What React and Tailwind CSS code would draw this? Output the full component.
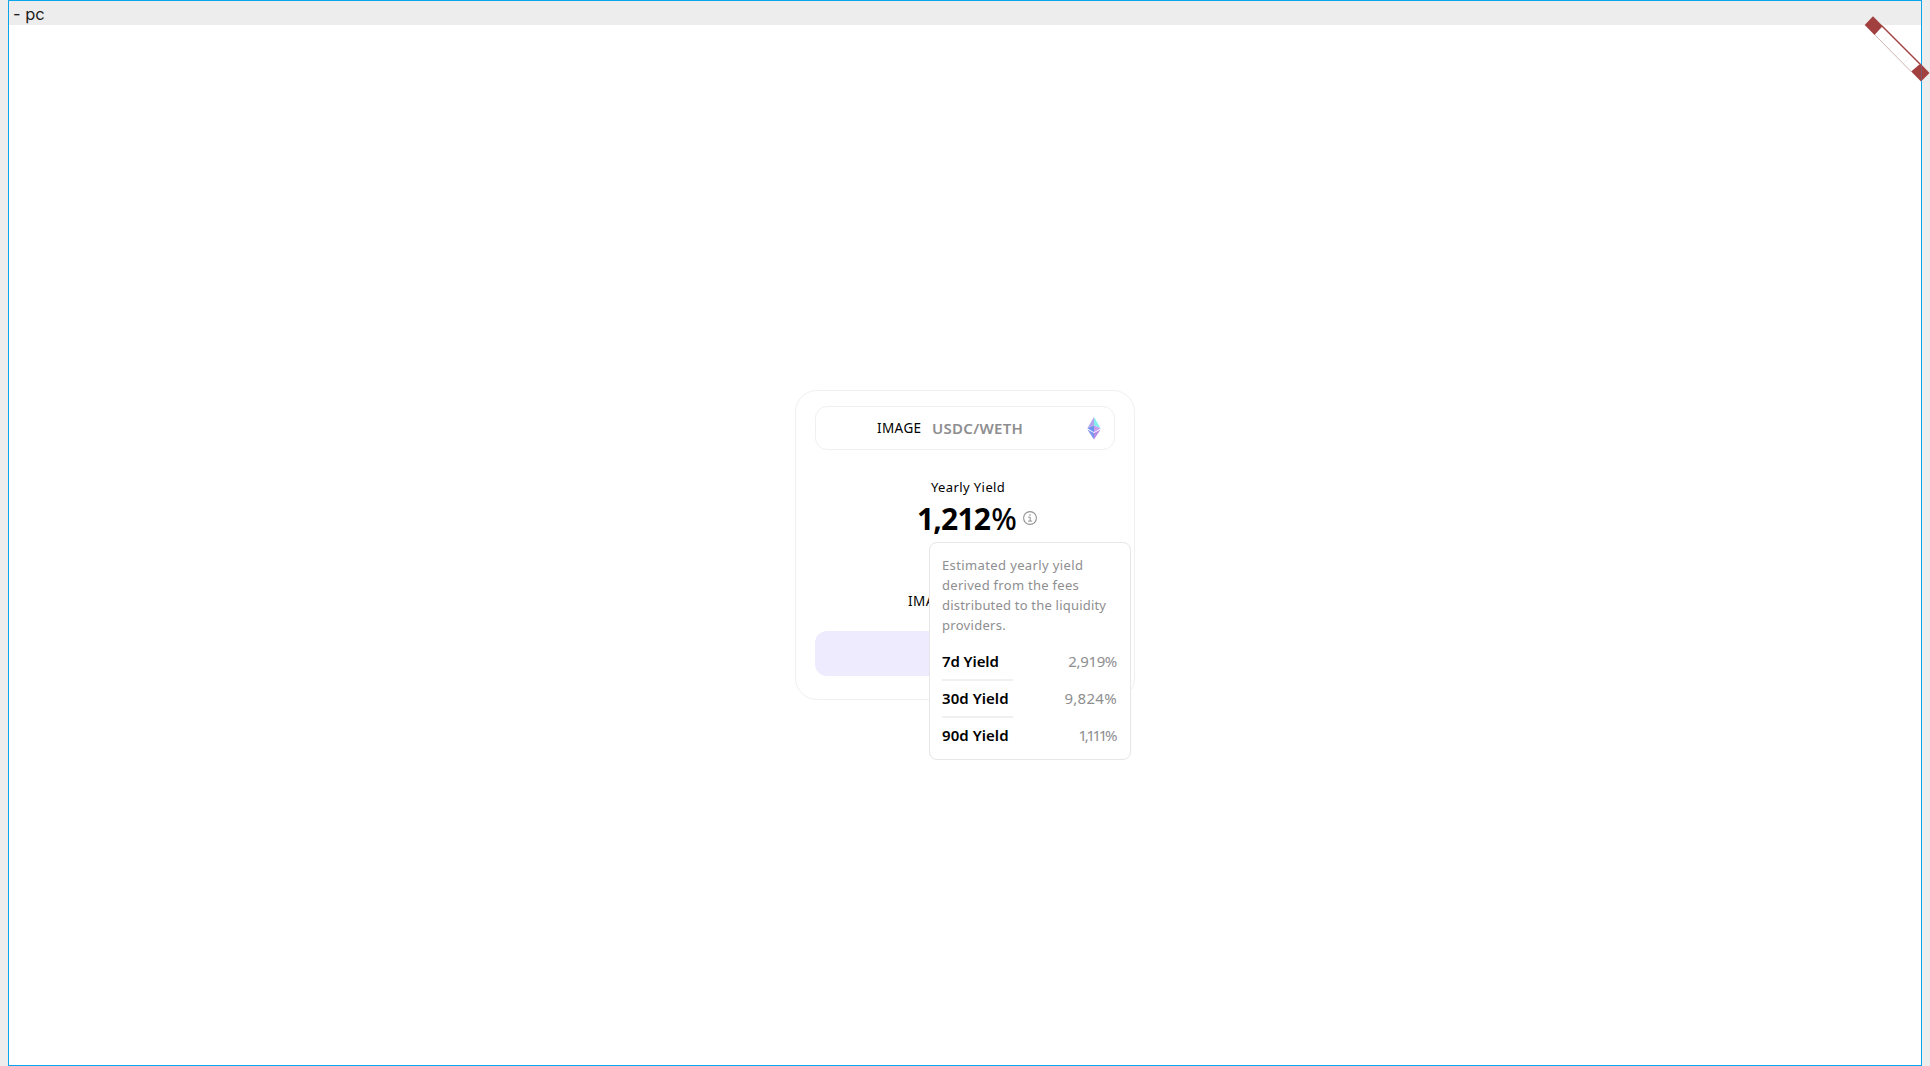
import React from "react";

const yields = [
  { label: "7d Yield", value: "2,919%", labelClass: "tracking-[-0.1px]", valueClass: "tracking-[-0.35px]" },
  { label: "30d Yield", value: "9,824%", labelClass: "tracking-[0.05px]", valueClass: "tracking-[0.3px]" },
  { label: "90d Yield", value: "1,111%", labelClass: "tracking-[0.05px]", valueClass: "mr-[2px] tracking-[-2.4px]" },
];

function EthIcon() {
  return (
    <svg width="14" height="23" viewBox="0 0 14 23" className="block">
      <path d="M7 0 0.4 11.3 7 8.5Z" fill="#b5a3ee" />
      <path d="M7 0 13.6 11.3 7 8.5Z" fill="#84f0ee" />
      <path d="M0.4 11.3 7 8.4V15.2Z" fill="#6c94ee" />
      <path d="M13.6 11.3 7 8.4V15.2Z" fill="#c79cf0" />
      <path d="M0.4 12.4 7 16V22.5Z" fill="#7d96f0" />
      <path d="M13.6 12.4 7 16V22.5Z" fill="#b58ce8" />
    </svg>
  );
}

function InfoIcon() {
  return (
    <svg width="14" height="14" viewBox="0 0 14 14" fill="none" stroke="#929294" className="mb-[2px] block">
      <circle cx="7" cy="7" r="6.4" strokeWidth="1.1" />
      <path d="M5.2 6.2H7.2V10M5 10.1H9.2" strokeWidth="1" />
      <circle cx="7" cy="4" r="0.8" fill="#929294" stroke="none" />
    </svg>
  );
}

function Ribbon() {
  return (
    <svg width="66" height="67" viewBox="1864 15 66 67" className="absolute left-[1864px] top-[15px]">
      <path d="M1875 35 1911 71.5" stroke="#cdb4b4" strokeWidth="1" />
      <path d="M1882 42l5-5M1889 49l5-5M1896 56l5-5M1904 63l5-5" stroke="#f4ecec" strokeWidth="0.7" />
      <path d="M1882 26 1920 64" stroke="#a24040" strokeWidth="1.4" />
      <path d="M1873 16.2 1882.7 26 1874.5 34.9 1864.7 25Z" fill="#a24040" />
      <path d="M1920.5 63.5 1929.5 73 1921 81.5 1911.2 71.5Z" fill="#a24040" />
      <path d="M1921.5 63V82" stroke="#0ba5ec" strokeWidth="1" opacity="0.25" />
    </svg>
  );
}

function Tooltip() {
  return (
    <div className="absolute left-[133px] top-[151px] h-[218px] w-[202px] rounded-lg border border-[#e6e6e8] bg-white px-3 pt-3">
      <p className="whitespace-nowrap text-[13px] leading-5 text-[#8e8e90]">
        <span className="block tracking-[0.38px]">Estimated yearly yield</span>
        <span className="block tracking-[0.28px]">derived from the fees</span>
        <span className="block tracking-[0.2px]">distributed to the liquidity</span>
        <span className="block tracking-[0.3px]">providers.</span>
      </p>
      <div className="mt-[15px]">
        {yields.map((y, i) => (
          <div key={y.label} className="relative flex h-[37px] justify-between whitespace-nowrap pr-px text-[15px] leading-[22px]">
            <span className={"font-semibold text-black " + y.labelClass}>{y.label}</span>
            <span className={"text-[#8e8e90] " + y.valueClass}>{y.value}</span>
            {i < 2 && <div className="absolute left-0 top-[29px] h-[2px] w-[71px] bg-[#f0f0f0]" />}
          </div>
        ))}
      </div>
    </div>
  );
}

export default function App() {
  return (
    <div className="relative h-[1066px] w-[1930px] overflow-hidden bg-[#ededed] px-2 font-['Noto_Sans',sans-serif]">
      <div className="flex h-[1066px] w-[1914px] flex-col border border-[#0ba5ec] bg-white">
        <header className="h-6 bg-[#ededed] pl-1 font-['Inter',sans-serif] text-[16.5px] font-normal leading-[26px] text-[#1c1c1c]">- pc</header>
        <main className="pl-[786px] pt-[365px]">
          <section className="relative flex h-[310px] w-[340px] flex-col rounded-[22px] border border-[#f0f0f0] px-[19px] pt-[15px]">
            <div className="flex h-11 w-[300px] items-center rounded-xl border border-[#f0f0f0] pl-[61px] pr-[13px]">
              <span className="w-[55px] text-[13.5px] leading-5 tracking-[0.4px] text-black">IMAGE</span>
              <span className="text-[15px] font-semibold leading-5 tracking-[0.3px] text-[#8e8e90]">USDC/WETH</span>
              <span className="ml-auto"><EthIcon /></span>
            </div>
            <div className="mt-[27px] pl-[116px] text-[13px] leading-5 tracking-[0.4px] text-black">Yearly Yield</div>
            <div className="mt-1 flex h-9 items-center pl-[102px]">
              <span className="w-[106px] whitespace-nowrap text-[30px] font-bold leading-9 tracking-[-0.8px] text-black">
                1,212<span className="ml-px font-medium">%</span>
              </span>
              <InfoIcon />
            </div>
            <div className="mt-[54px] pl-[93px] text-[13.5px] leading-5 tracking-[0.5px] text-black">IMAGE</div>
            <div className="mt-[20px] h-[45px] w-[300px] shrink-0 rounded-xl bg-[#eeebff]" />
            <Tooltip />
          </section>
        </main>
      </div>
      <Ribbon />
    </div>
  );
}
